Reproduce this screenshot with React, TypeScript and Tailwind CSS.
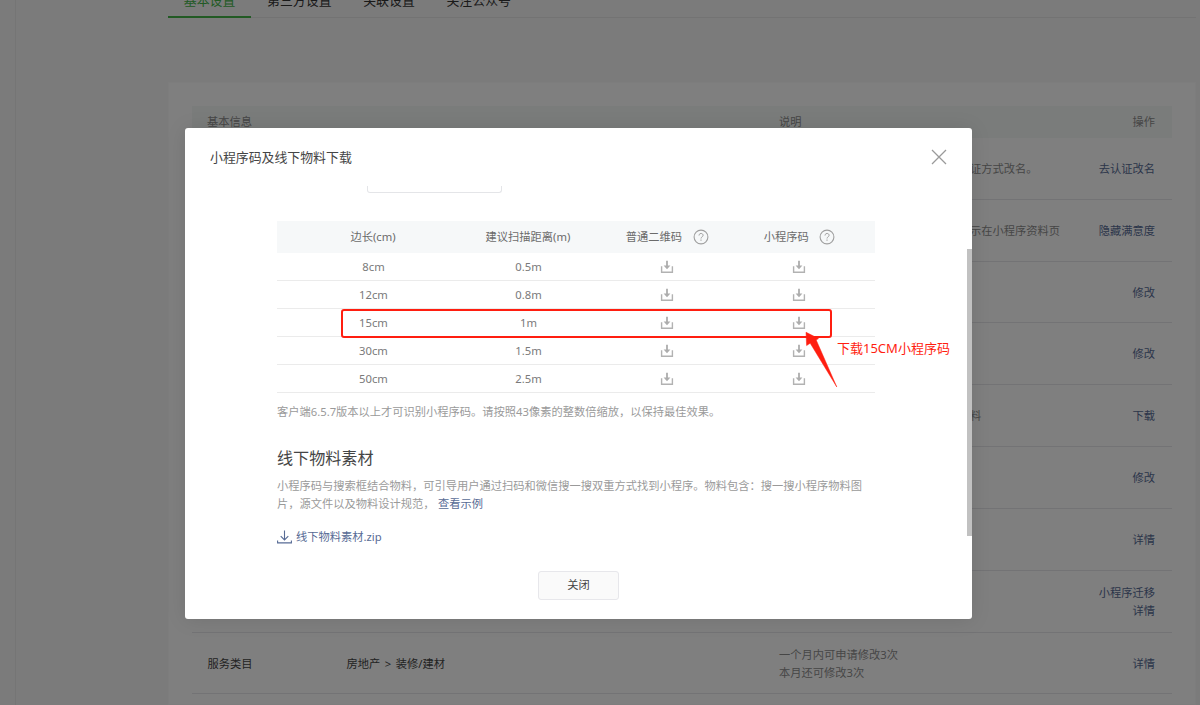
import React from "react";

const tabs = ["基本设置", "第三方设置", "关联设置", "关注公众号"];

type InfoRow = {
  name?: string;
  value?: string;
  tail?: string;
  desc?: string[];
  actions: string[];
};

const infoRows: InfoRow[] = [
  { tail: "证方式改名。", actions: ["去认证改名"] },
  { tail: "示在小程序资料页", actions: ["隐藏满意度"] },
  { actions: ["修改"] },
  { actions: ["修改"] },
  { tail: "料", actions: ["下载"] },
  { actions: ["修改"] },
  { actions: ["详情"] },
  { actions: ["小程序迁移", "详情"] },
  {
    name: "服务类目",
    value: "房地产 > 装修/建材",
    desc: ["一个月内可申请修改3次", "本月还可修改3次"],
    actions: ["详情"],
  },
];

const sizes = [
  { side: "8cm", distance: "0.5m" },
  { side: "12cm", distance: "0.8m" },
  { side: "15cm", distance: "1m" },
  { side: "30cm", distance: "1.5m" },
  { side: "50cm", distance: "2.5m" },
];

const DownloadIcon = () => (
  <svg width="14" height="14" viewBox="0 0 14 14" className="mx-auto block">
    <path d="M1.6 6.2v6.1h10.8V6.2" fill="none" stroke="#b2b2b2" strokeWidth="1.4" />
    <path d="M6.1.8h1.8v4.8h2.5L7 9.2 3.6 5.6h2.5z" fill="#adadad" />
  </svg>
);

const HelpIcon = () => (
  <svg width="16" height="16" viewBox="0 0 16 16" fill="none" stroke="#a0a0a0">
    <circle cx="8" cy="8" r="6.9" strokeWidth="1.1" />
    <path d="M6 6.5c0-2.8 4.1-2.6 4.1-.2 0 1.5-2.1 1.6-2.1 3.2" strokeWidth="1" />
    <path d="M8 10.6v1.2" strokeWidth="1.1" />
  </svg>
);

const SettingsPage = () => (
  <div className="flex h-full bg-[#f7f7f7]">
    <div className="w-4 shrink-0 border-r border-[#ebebeb]" />
    <div className="ml-[152px] flex w-[1028px] shrink-0 flex-col">
      <nav className="flex h-[18px] shrink-0 border-b border-[#e7e7e7] text-[12.9px] leading-[18px] text-[#353535]">
        {tabs.map((tab, i) => (
          <div
            key={tab}
            className={`h-[18px] px-[15.85px] ${
              i === 0 ? "border-b-2 border-[#44b549] text-[#44b549]" : ""
            }`}
          >
            <span className="-mt-[9px] block">{tab}</span>
          </div>
        ))}
      </nav>

      <section className="mt-16 flex-1 border border-[#fafafa] bg-white px-[23px] pt-[23px]">
        <div className="flex h-8 items-center bg-[#f4f8f6] pt-px pr-[17px] pl-[15px] text-[#8d8d8d]">
          <span className="w-[572px]">基本信息</span>
          <span className="flex-1">说明</span>
          <span>操作</span>
        </div>
        {infoRows.map((row, i) => (
          <div
            key={i}
            className="flex h-[61.84px] items-center border-b border-[#e7e7eb] pt-px pr-[17px] pl-[15.4px] leading-[18px]"
          >
            <span className="w-[139px] text-[#454545]">{row.name}</span>
            <span className="w-[432.6px] text-[#454545] [word-spacing:1.7px]">{row.value}</span>
            <div className="flex-1 text-[#8d8d8d]">
              {row.tail && <p className="pl-[191px]">{row.tail}</p>}
              {row.desc?.map((line) => <p key={line}>{line}</p>)}
            </div>
            <div className="text-right text-[#576b95]">
              {row.actions.map((action) => (
                <p key={action}>{action}</p>
              ))}
            </div>
          </div>
        ))}
      </section>
    </div>
  </div>
);

const SizeTable = () => (
  <div className="relative mt-7 w-[597.5px] text-[#7a7a7a]">
    <div className="grid h-8 grid-cols-[193px_117px_160px_104px] items-center bg-[#f6f8f9] text-center text-[#6b6b6b]">
      <span className="pr-px">边长(cm)</span>
      <span className="pr-px">建议扫描距离(m)</span>
      <span className="flex items-center justify-center gap-[11px] pl-px">
        普通二维码
        <HelpIcon />
      </span>
      <span className="flex items-center justify-center gap-[10.5px] pl-px">
        小程序码
        <HelpIcon />
      </span>
    </div>
    {sizes.map((size) => (
      <div
        key={size.side}
        className="grid h-[28.1px] grid-cols-[193px_117px_160px_104px] items-center border-b border-[#ebebeb] text-center"
      >
        <span className="pt-px">{size.side}</span>
        <span className="pt-px">{size.distance}</span>
        <DownloadIcon />
        <DownloadIcon />
      </div>
    ))}

    {/* 标注 */}
    <div className="absolute top-[88px] left-16 h-[29px] w-[491px] rounded-[3px] border-2 border-[#ff1e10]" />
    <svg className="absolute top-[110px] left-[527px]" width="36" height="58" viewBox="0 0 36 58">
      <path d="M2 1.2 14.5 7.6 12.2 9 32.8 56 6.2 12.2 2.6 14.6z" fill="#ff1e10" stroke="#ff1e10" strokeWidth=".5" />
    </svg>
    <span className="absolute top-[117px] left-[560px] text-[13px] leading-5 whitespace-nowrap text-[#ff1e10]">
      下载15CM小程序码
    </span>
  </div>
);

const DownloadDialog = () => (
  <div className="relative flex h-[491px] w-[787px] flex-col rounded-[3px] bg-white shadow-[0_1px_20px_rgba(0,0,0,0.1)]">
    <header className="flex h-[58px] shrink-0 items-center justify-between pr-[25px] pl-[25px]">
      <h3 className="pt-0.5 text-[12.9px] text-[#454545]">小程序码及线下物料下载</h3>
      <svg width="16" height="16" viewBox="0 0 16 16" stroke="#9a9a9a" strokeWidth="1.3">
        <path d="M1 1l14 14M15 1L1 15" />
      </svg>
    </header>

    <div className="flex-1 overflow-hidden pl-[92px]">
      <div className="ml-[90px] h-[7px] w-[135px] rounded-b-[3px] border border-t-0 border-[#e4e5e8]" />
      <SizeTable />
      <p className="mt-[10px] leading-[18px] text-[#9a9a9a]">
        客户端6.5.7版本以上才可识别小程序码。请按照43像素的整数倍缩放，以保持最佳效果。
      </p>
      <h4 className="mt-[25px] text-[16.1px] leading-6 text-[#454545]">线下物料素材</h4>
      <p className="mt-[7px] leading-[18px] whitespace-nowrap text-[#9a9a9a]">
        小程序码与搜索框结合物料，可引导用户通过扫码和微信搜一搜双重方式找到小程序。物料包含：搜一搜小程序物料图
        <br />
        片，源文件以及物料设计规范，
        <a className="ml-[3.5px] text-[#576b95]">查看示例</a>
      </p>
      <a className="mt-[15px] flex items-center gap-1 leading-[18px] text-[#576b95]">
        <svg width="15" height="15" viewBox="0 0 15 15" fill="none" stroke="#576b95" strokeWidth="1.1">
          <path d="M7.5.5v9M3.7 6.1l3.8 3.8 3.8-3.8M.6 10.5v2.4h13.8v-2.4" />
        </svg>
        线下物料素材.zip
      </a>
    </div>

    <footer className="flex h-12 shrink-0 items-start justify-center">
      <button className="h-[29px] w-[81px] rounded-[3px] border border-[#e7e7eb] bg-[#fafafa] text-[#454545]">
        关闭
      </button>
    </footer>

    <div className="absolute top-[121px] right-0 h-[287px] w-[5px] bg-[#c1c1c1]" />
  </div>
);

const App = () => {
  return (
    <div className="relative h-[705px] w-[1200px] overflow-hidden font-['Noto_Sans','Noto_Sans_CJK_SC',sans-serif] text-[11.26px]">
      <SettingsPage />
      <div className="absolute inset-0 flex items-start bg-black/50 pt-32 pl-[185px]">
        <DownloadDialog />
      </div>
    </div>
  );
};

export default App;
